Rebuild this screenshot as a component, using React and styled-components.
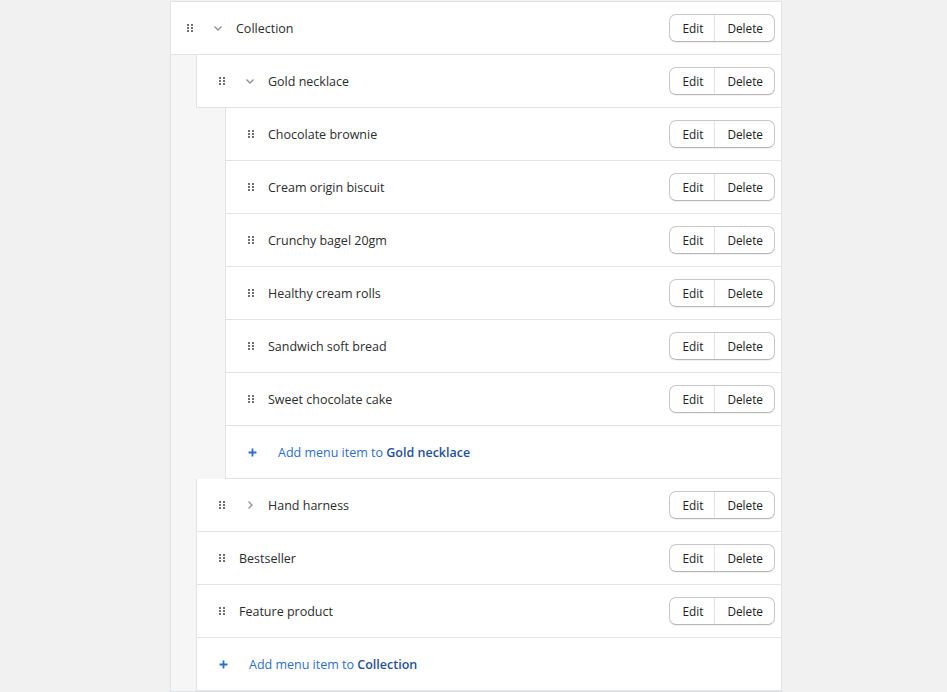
import React from "react";
import styled, { createGlobalStyle } from "styled-components";

const GlobalStyle = createGlobalStyle`
  html, body {
    margin: 0;
    padding: 0;
    background: #f1f1f1;
  }
  body {
    font-family: "Open Sans", "Noto Sans", sans-serif;
    color: #202223;
  }
`;

const menu = {
  title: "Collection",
  open: true,
  children: [
    {
      title: "Gold necklace",
      open: true,
      children: [
        { title: "Chocolate brownie" },
        { title: "Cream origin biscuit" },
        { title: "Crunchy bagel 20gm" },
        { title: "Healthy cream rolls" },
        { title: "Sandwich soft bread" },
        { title: "Sweet chocolate cake" },
      ],
    },
    { title: "Hand harness", open: false, children: [] },
    { title: "Bestseller" },
    { title: "Feature product" },
  ],
};

function DragHandle() {
  return (
    <HandleBox>
      <svg width="6" height="8" viewBox="0 0 6 8">
        {[0, 3, 6].map((y) =>
          [0, 4].map((x) => (
            <rect key={`${x}-${y}`} x={x} y={y} width="2" height="2" fill="#6d7175" />
          ))
        )}
      </svg>
    </HandleBox>
  );
}

function Chevron({ open }) {
  return (
    <ChevronBox>
      <svg width="10" height="10" viewBox="0 0 10 10">
        <polyline
          points={open ? "1.5,3.5 5,7 8.5,3.5" : "3.5,1.5 7,5 3.5,8.5"}
          fill="none"
          stroke="#8c9196"
          strokeWidth="1.3"
        />
      </svg>
    </ChevronBox>
  );
}

function Actions() {
  return (
    <ButtonGroup>
      <Button>Edit</Button>
      <Button>Delete</Button>
    </ButtonGroup>
  );
}

function MenuNode({ item, depth }) {
  const hasChildren = Array.isArray(item.children);
  return (
    <>
      <Row $nested={depth > 0}>
        <DragHandle />
        {hasChildren && <Chevron open={item.open} />}
        <Title>{item.title}</Title>
        <Actions />
      </Row>
      {hasChildren && item.open && (
        <Children $indent={depth === 0 ? 25 : 29}>
          {item.children.map((child) => (
            <MenuNode key={child.title} item={child} depth={depth + 1} />
          ))}
          <AddRow>
            <PlusIcon>
              <svg width="9" height="9" viewBox="0 0 9 9">
                <path d="M4.5 0.5v8M0.5 4.5h8" stroke="#2c6ecb" strokeWidth="1.8" />
              </svg>
            </PlusIcon>
            <AddLink>
              Add menu item to <strong>{item.title}</strong>
            </AddLink>
          </AddRow>
        </Children>
      )}
    </>
  );
}

export default function App() {
  return (
    <>
      <GlobalStyle />
      <Page>
        <Panel>
          <MenuNode item={menu} depth={0} />
        </Panel>
      </Page>
    </>
  );
}

const Page = styled.div`
  padding-top: 1px;
  min-height: 692px;
  box-sizing: border-box;
`;

const Panel = styled.div`
  margin-left: 170px;
  width: 612px;
  box-sizing: border-box;
  background: #ffffff;
  border: 1px solid #e1e3e5;
`;

const Row = styled.div`
  display: flex;
  align-items: center;
  height: 52px;
  padding: 0 6px 0 ${(p) => (p.$nested ? "22px" : "16px")};
  background: #ffffff;
  border-bottom: 1px solid #e1e3e5;
  font-size: 12.5px;
`;

const Children = styled.div`
  padding-left: ${(p) => p.$indent}px;
  background: #f6f6f7;

  & > ${Row} {
    border-left: 1px solid #e1e3e5;
  }
`;

const HandleBox = styled.span`
  display: flex;
  width: 6px;
  margin-right: 14px;
`;

const ChevronBox = styled.span`
  display: flex;
  width: 10px;
  margin: 0 13px 0 6px;
`;

const Title = styled.span`
  flex: 1;
  line-height: 20px;
  padding-top: 2px;
  color: #2b2d2f;
`;

const ButtonGroup = styled.div`
  display: flex;
  height: 28px;
  margin-left: 1px;
  border: 1px solid #c4c8cc;
  border-bottom-color: #b3b8bd;
  border-radius: 7px;
  box-sizing: border-box;
  background: #ffffff;
  box-shadow: 0 1px 0 rgba(0, 0, 0, 0.05);
  overflow: hidden;
`;

const Button = styled.button`
  border: none;
  background: transparent;
  font-family: inherit;
  font-size: 11.8px;
  color: #202223;
  padding: 0 11px 0 12px;
  cursor: pointer;

  & + & {
    border-left: 1px solid #e1e3e5;
  }
`;

const AddRow = styled.div`
  display: flex;
  align-items: center;
  height: 52px;
  padding-left: 22px;
  background: #ffffff;
  border-left: 1px solid #e1e3e5;
  border-bottom: 1px solid #e1e3e5;
  font-size: 12.5px;
  color: #2c6ecb;
`;

const PlusIcon = styled.span`
  display: flex;
  width: 9px;
  margin-right: 21px;
`;

const AddLink = styled.span`
  strong {
    font-weight: 600;
    color: #1f5199;
  }
`;
